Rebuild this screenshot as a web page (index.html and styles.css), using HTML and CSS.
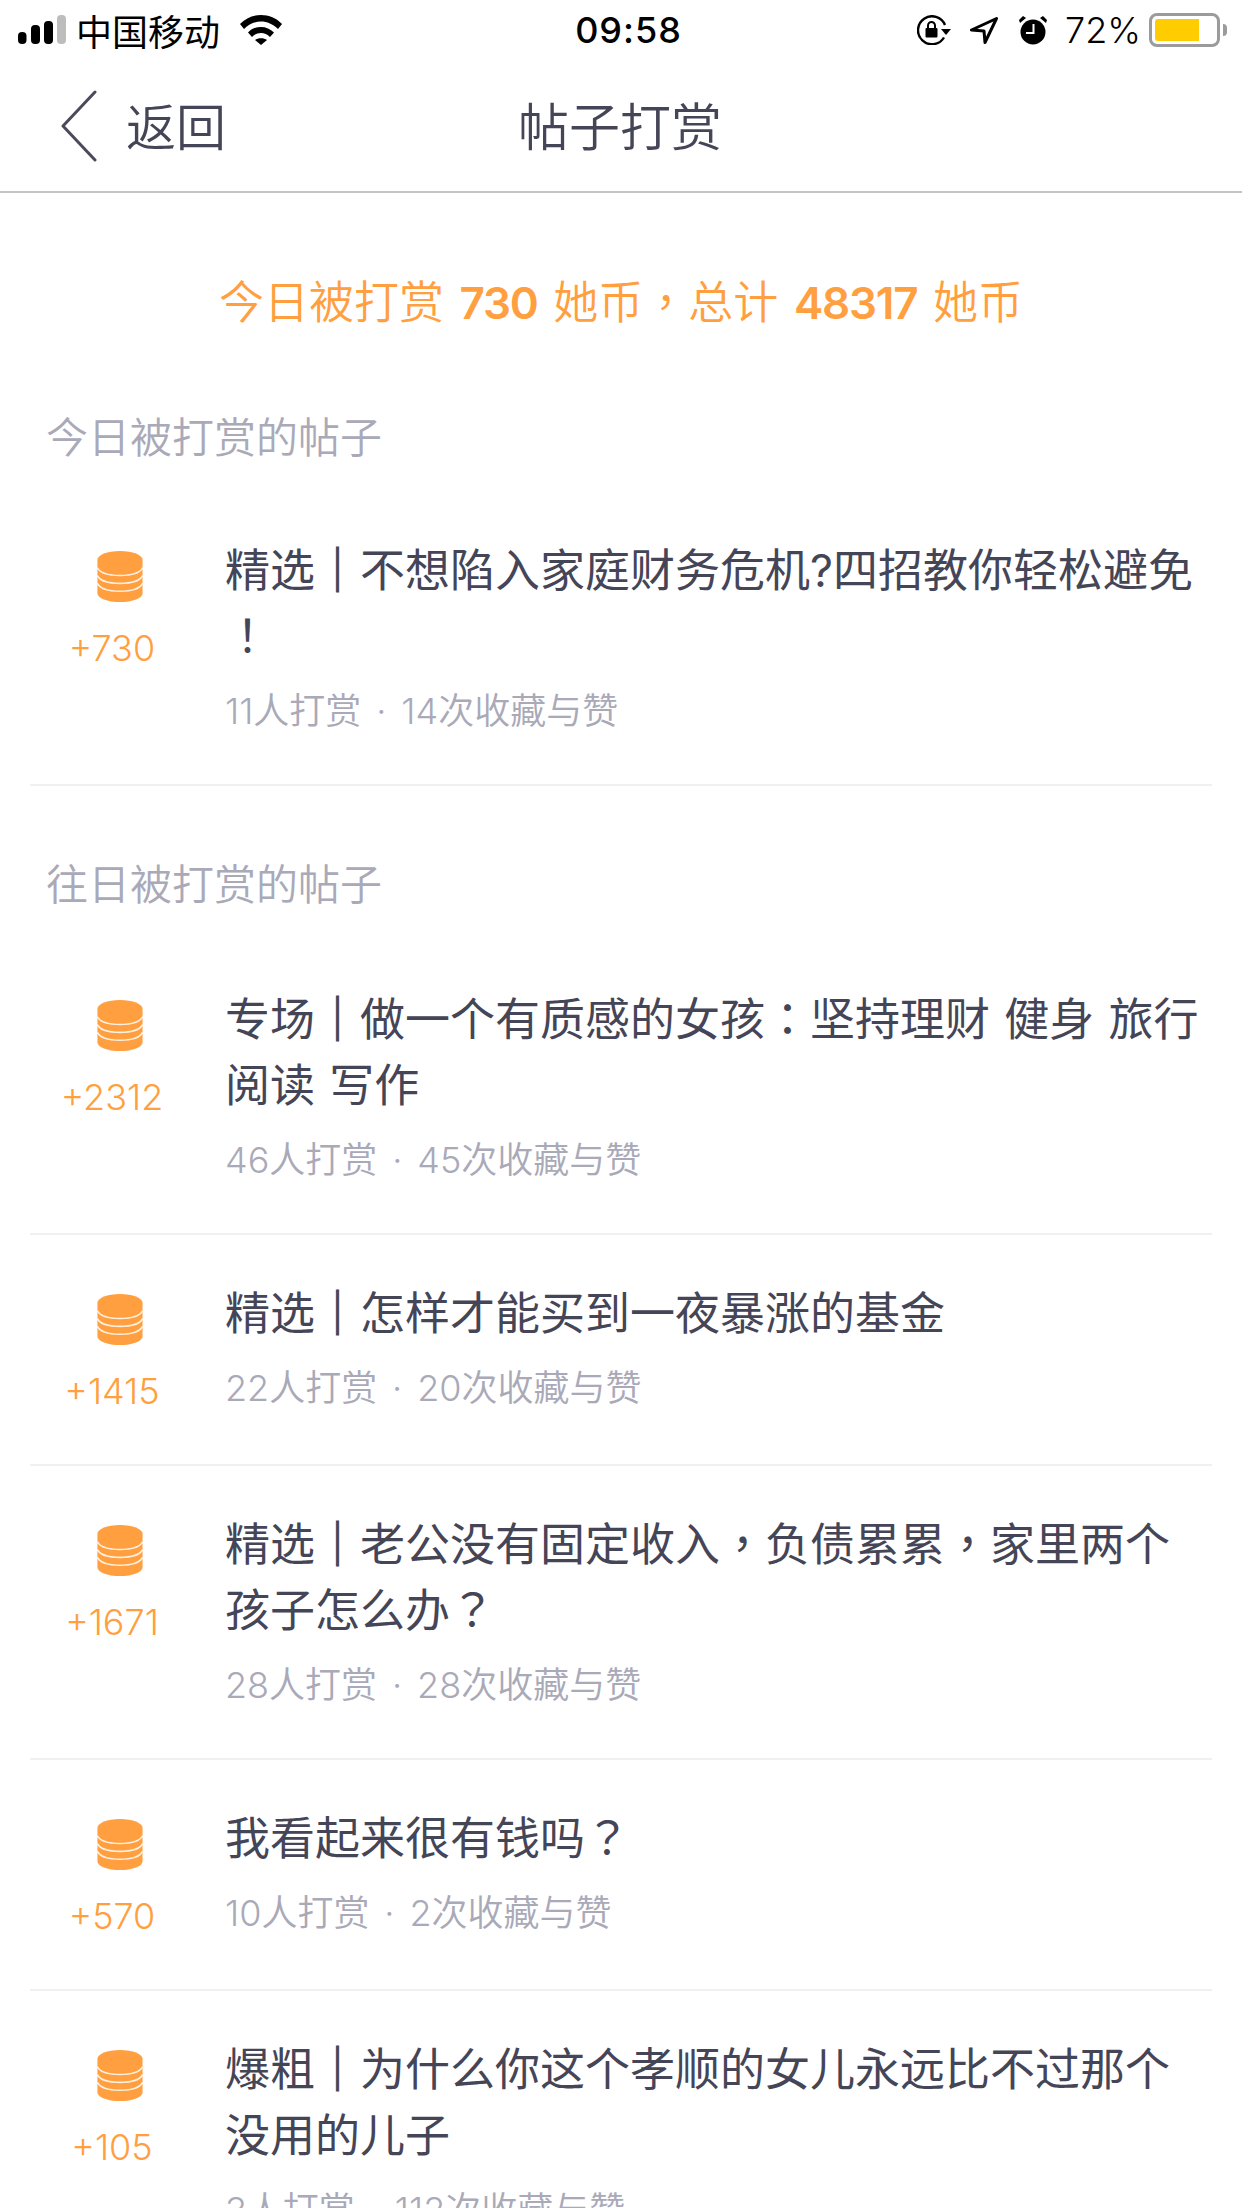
FILE: index.html
```html
<!DOCTYPE html>
<html lang="zh">
<head>
<meta charset="utf-8">
<title>帖子打赏</title>
<link rel="stylesheet" href="styles.css">
</head>
<body>
<svg class="defs" width="0" height="0" aria-hidden="true">
  <symbol id="coins" viewBox="0 0 46 52">
    <path fill="#ff9f40" d="M0 9C0 4 10 0 23 0s23 4 23 9v34c0 5-10 9-23 9S0 48 0 43z"/>
    <g fill="none" stroke="#fff" stroke-width="1.6" opacity=".85">
      <path d="M0 17c2 5 11 8 23 8s21-3 23-8"/>
      <path d="M0 25c2 5 11 8 23 8s21-3 23-8"/>
      <path d="M0 33c2 5 11 8 23 8s21-3 23-8"/>
    </g>
  </symbol>
</svg>
<div class="page">
  <header class="status">
    <div class="status-left">
      <svg class="signal" width="48" height="30" viewBox="0 0 48 30">
        <rect x="0" y="17" width="8.500" height="12" rx="4" fill="#000"/>
        <rect x="13" y="10" width="9" height="19" rx="4" fill="#000"/>
        <rect x="26" y="6" width="9" height="23" rx="4" fill="#000"/>
        <rect x="39" y="0" width="9" height="29" rx="4" fill="#bdbdbd"/>
      </svg>
      <span class="carrier">中国移动</span>
      <svg class="wifi" width="42" height="30" viewBox="0 0 42 30">
        <path d="M0 9C11-3 31-3 42 9l-4 5C28 4 14 4 4 14z" fill="#000"/>
        <path d="M8 17.500C15 10 27 10 34 17.500L30 22C25 16.500 17 16.500 12 22z" fill="#000"/>
        <path d="M15 25c3-2.500 9-2.500 12 0l-6 5z" fill="#000"/>
      </svg>
    </div>
    <div class="status-time">09:58</div>
    <div class="status-right">
      <svg class="lock" width="34" height="30" viewBox="0 0 34 30">
        <path d="M27 22.500A14 14 0 1 1 28 10" fill="none" stroke="#000" stroke-width="2.400"/>
        <path d="M24 14h10l-5 6z" fill="#000"/>
        <rect x="8.500" y="13" width="12" height="9.500" rx="1" fill="#000"/>
        <path d="M11 13V10.500a3.500 3.500 0 0 1 7 0V13" fill="none" stroke="#000" stroke-width="2"/>
      </svg>
      <svg class="arrow" width="28" height="27" viewBox="0 0 28 27">
        <path d="M26.500 1.500 1.500 13l12.500 1 1 11.500z" fill="none" stroke="#000" stroke-width="3" stroke-linejoin="round"/>
      </svg>
      <svg class="alarm" width="28" height="30" viewBox="0 0 28 30">
        <circle cx="14" cy="17" r="12.500" fill="#000"/>
        <path d="M0 5 4 1l3 2-6 5zM28 5 24 1l-3 2 6 5z" fill="#000"/>
        <path d="M14.500 9v9H7" fill="none" stroke="#fff" stroke-width="2"/>
      </svg>
      <span class="percent">72%</span>
      <div class="battery"><div class="battery-body"><div class="battery-fill"></div></div><div class="battery-cap"></div></div>
    </div>
  </header>

  <nav class="nav">
    <div class="back">
      <svg width="38" height="72" viewBox="0 0 38 72">
        <path d="M35 2 3 36l32 34" fill="none" stroke="#4a4a5a" stroke-width="3" stroke-linejoin="round" stroke-linecap="round"/>
      </svg>
      <span class="back-label">返回</span>
    </div>
    <div class="nav-title">帖子打赏</div>
  </nav>

  <main>
    <p class="summary">今日被打赏 <b>730</b> 她币<span class="punct" lang="zh-TW">，</span>总计 <b>48317</b> 她币</p>

    <h2 class="section">今日被打赏的帖子</h2>
    <article class="item">
      <div class="reward"><svg class="coin"><use href="#coins"/></svg><span>+730</span></div>
      <div class="body">
        <div class="title">精选<span class="bar">｜</span>不想陷入家庭财务危机?四招教你轻松避免<br><span class="punct" lang="zh-TW">！</span></div>
        <div class="meta">11人打赏<span class="dot">·</span>14次收藏与赞</div>
      </div>
    </article>

    <h2 class="section section-past">往日被打赏的帖子</h2>
    <article class="item">
      <div class="reward"><svg class="coin"><use href="#coins"/></svg><span>+2312</span></div>
      <div class="body">
        <div class="title">专场<span class="bar">｜</span>做一个有质感的女孩<span class="punct" lang="zh-TW">：</span>坚持理财 健身 旅行 阅读 写作</div>
        <div class="meta">46人打赏<span class="dot">·</span>45次收藏与赞</div>
      </div>
    </article>
    <article class="item">
      <div class="reward"><svg class="coin"><use href="#coins"/></svg><span>+1415</span></div>
      <div class="body">
        <div class="title">精选<span class="bar">｜</span>怎样才能买到一夜暴涨的基金</div>
        <div class="meta">22人打赏<span class="dot">·</span>20次收藏与赞</div>
      </div>
    </article>
    <article class="item">
      <div class="reward"><svg class="coin"><use href="#coins"/></svg><span>+1671</span></div>
      <div class="body">
        <div class="title">精选<span class="bar">｜</span>老公没有固定收入<span class="punct" lang="zh-TW">，</span>负债累累<span class="punct" lang="zh-TW">，</span>家里两个孩子怎么办<span class="punct" lang="zh-TW">？</span></div>
        <div class="meta">28人打赏<span class="dot">·</span>28次收藏与赞</div>
      </div>
    </article>
    <article class="item">
      <div class="reward"><svg class="coin"><use href="#coins"/></svg><span>+570</span></div>
      <div class="body">
        <div class="title">我看起来很有钱吗<span class="punct" lang="zh-TW">？</span></div>
        <div class="meta">10人打赏<span class="dot">·</span>2次收藏与赞</div>
      </div>
    </article>
    <article class="item">
      <div class="reward"><svg class="coin"><use href="#coins"/></svg><span>+105</span></div>
      <div class="body">
        <div class="title">爆粗<span class="bar">｜</span>为什么你这个孝顺的女儿永远比不过那个没用的儿子</div>
        <div class="meta">3人打赏<span class="dot">·</span>112次收藏与赞</div>
      </div>
    </article>
  </main>
</div>
</body>
</html>
```
FILE: styles.css
```css
* { box-sizing: border-box; margin: 0; padding: 0; }
html, body { background: #fff; }
body {
  width: 1242px;
  height: 2208px;
  overflow: hidden;
  font-family: Inter, "Noto Sans CJK SC", sans-serif;
  color: #454558;
}
.defs { display: block; position: absolute; }
.page { width: 1242px; }
.punct { font-family: "Noto Sans CJK TC", sans-serif; line-height: 0; }
.bar { font-weight: 700; line-height: 0; -webkit-text-stroke: 1px #454558; }

.status {
  height: 60px;
  display: grid;
  grid-template-columns: 1fr auto 1fr;
  align-items: center;
  padding: 0 15px 0 18px;
  color: #000;
}
.status-left, .status-right { display: flex; align-items: center; }
.status-right { justify-content: flex-end; }
.carrier { font-family: "Noto Sans CJK SC", sans-serif; font-size: 36px; line-height: 60px; margin-left: 10px; }
.wifi { margin-left: 20px; }
.status-time { font-size: 36px; font-weight: 500; letter-spacing: 1px; padding-left: 12px; }
.arrow { margin-left: 19px; }
.alarm { margin-left: 21px; }
.percent { font-size: 36px; margin-left: 18px; font-weight: 300; }
.battery { display: flex; align-items: center; margin-left: 8px; }
.battery-body {
  width: 71px;
  height: 34px;
  border: 3px solid #9b9b9b;
  border-radius: 8px;
  padding: 3px;
}
.battery-fill { width: 44px; height: 22px; background: #ffcc00; border-radius: 3px 0 0 3px; }
.battery-cap { width: 4px; height: 12px; background: #9b9b9b; border-radius: 0 4px 4px 0; margin-left: 3px; }

.nav {
  height: 133px;
  border-bottom: 2px solid #c4c4c4;
  position: relative;
  display: flex;
  align-items: center;
  justify-content: center;
  padding-bottom: 4px;
}
.back {
  position: absolute;
  left: 60px;
  top: 28px;
  display: flex;
  align-items: center;
  gap: 28px;
  font-family: "Noto Sans CJK SC", sans-serif;
  font-size: 50px;
  font-weight: 350;
  color: #454558;
}
.back-label { padding-bottom: 4px; }
.nav-title { font-family: "Noto Sans CJK SC", sans-serif; font-size: 51px; font-weight: 350; padding-right: 2px; }

.summary {
  margin-top: 79px;
  line-height: 62px;
  text-align: center;
  font-size: 45px;
  font-weight: 350;
  color: #ff9f40;
  height: 62px;
  word-spacing: 3px;
}
.summary b { font-size: 44px; font-weight: 600; letter-spacing: -1.2px; }

.section {
  font-size: 42px;
  font-weight: 350;
  line-height: 60px;
  color: #a9a9b8;
  padding-left: 46px;
  margin-top: 74px;
  margin-bottom: 24px;
}
.section-past { margin-top: 69px; margin-bottom: 26px; }

.item {
  margin: 0 30px;
  display: flex;
  border-bottom: 2px solid #f0f0f2;
  padding: 46px 0 49px;
}
.reward {
  width: 195px;
  flex: none;
  padding: 13px 31px 0 0;
  display: flex;
  flex-direction: column;
  align-items: center;
  font-size: 36px;
  font-weight: 300;
  color: #ff9f40;
  line-height: 48px;
}
.coin { width: 46px; height: 51px; margin-left: 16px; margin-bottom: 22px; flex: none; }
.body { flex: 1; }
.title { font-size: 45px; font-weight: 400; line-height: 66px; width: 980px; word-spacing: 1.500px; }
.meta { font-size: 36px; font-weight: 350; line-height: 48px; color: #a9a9b8; margin-top: 17px; }
.dot { display: inline-block; width: 40px; text-align: center; }
```
